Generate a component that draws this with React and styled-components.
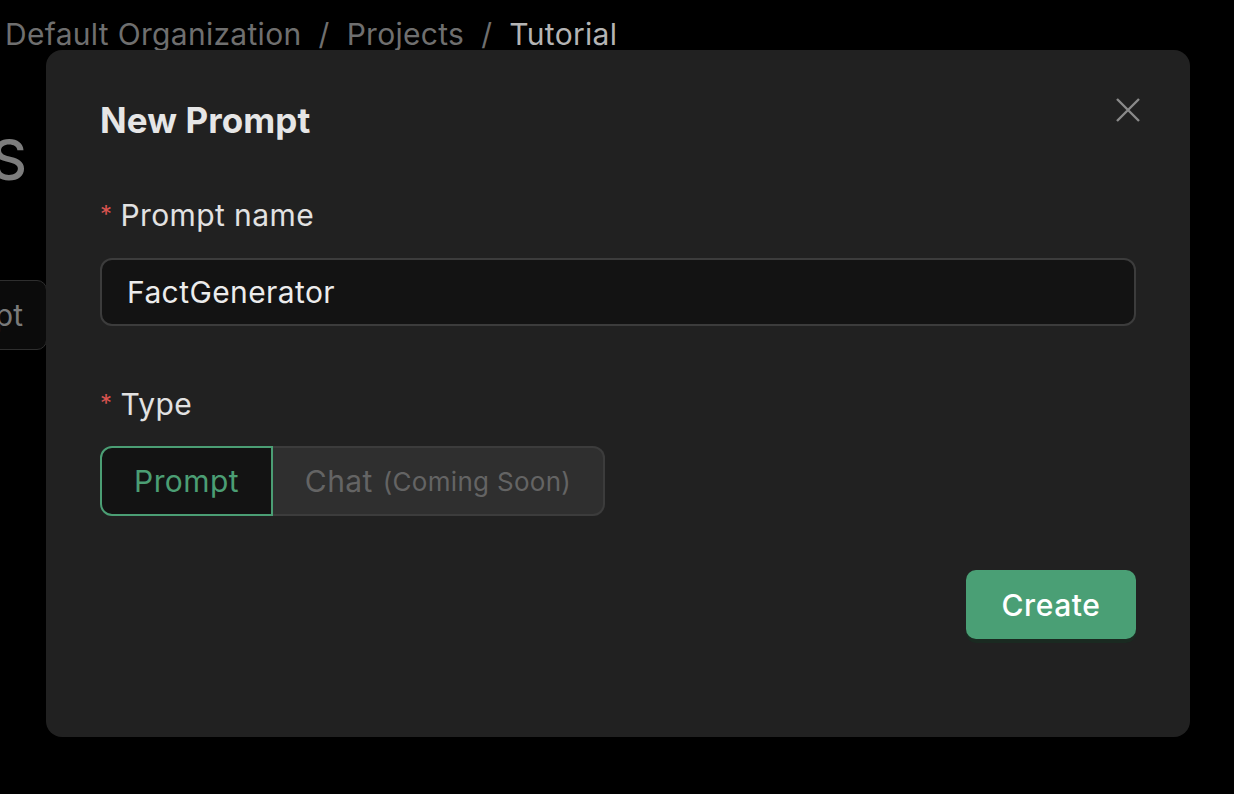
import React from 'react';
import styled, { createGlobalStyle } from 'styled-components';

const GlobalStyle = createGlobalStyle`
  html, body {
    margin: 0;
    padding: 0;
    background: #000;
    font-family: Inter, "Noto Sans", sans-serif;
    -webkit-font-smoothing: antialiased;
  }
`

const Page = styled.div`
  position: relative;
  width: 1234px;
  height: 794px;
  overflow: hidden;
  background: #000;
`

const Crumbs = styled.div`
  display: flex;
  gap: 17px;
  padding: 14px 0 0 5px;
  font-size: 30px;
  line-height: 40px;
  letter-spacing: 0.3px;
  color: #6f6f6f;
  .current {
    color: #b4b4b4;
  }
`

const Peek = styled.div`
  width: ${p => p.w}px;
  display: flex;
  justify-content: flex-end;
  white-space: nowrap;
`

const PageTitle = styled.h1`
  margin: 78px 0 0;
  font-size: 56px;
  line-height: 56px;
  font-weight: 500;
  color: #7d7d7d;
`

const GhostButton = styled.div`
  margin-top: 92px;
  height: 68px;
  padding: 0 23px;
  display: flex;
  align-items: center;
  border: 1px solid #2e2e2e;
  border-radius: 10px;
  background: #0b0b0b;
  color: #7a7a7a;
  font-size: 30px;
`

const Modal = styled.div`
  position: absolute;
  left: 46px;
  top: 50px;
  width: 1144px;
  height: 687px;
  box-sizing: border-box;
  padding: 50px 54px 0;
  background: #212121;
  border-radius: 16px;
  display: flex;
  flex-direction: column;
`

const Title = styled.h2`
  margin: 0;
  font-size: 35px;
  line-height: 40px;
  font-weight: 700;
  color: #e6e6e6;
  letter-spacing: 0.1px;
`

const Close = styled.button`
  position: absolute;
  top: 46px;
  right: 48px;
  width: 28px;
  height: 28px;
  padding: 0;
  border: none;
  background: none;
  color: #8a8a8a;
  display: flex;
  align-items: center;
  justify-content: center;
`

const Label = styled.div`
  margin-top: ${p => p.top}px;
  height: 40px;
  display: flex;
  align-items: center;
  gap: 8px;
  font-size: 30px;
  line-height: 40px;
  letter-spacing: 0.4px;
  color: #e2e2e2;
  .req {
    color: #d9534f;
    font-size: 24px;
    line-height: 1;
    align-self: flex-start;
    margin-top: 8px;
  }
`

const Input = styled.div`
  margin-top: 23px;
  height: 68px;
  box-sizing: border-box;
  padding: 0 25px;
  display: flex;
  align-items: center;
  background: #131313;
  border: 2px solid #3c3c3c;
  border-radius: 12px;
  font-size: 30px;
  letter-spacing: 0.4px;
  color: #ececec;
`

const Segments = styled.div`
  margin-top: 22px;
  display: flex;
`

const Segment = styled.div`
  height: 70px;
  width: ${p => p.w}px;
  box-sizing: border-box;
  display: flex;
  align-items: center;
  justify-content: center;
  gap: 10px;
  font-size: 30px;
  letter-spacing: 0.4px;
  border: 2px solid ${p => (p.active ? '#4b9e74' : '#3c3c3c')};
  border-left-width: ${p => (p.active ? 2 : 0)}px;
  border-radius: ${p => (p.active ? '12px 0 0 12px' : '0 12px 12px 0')};
  background: ${p => (p.active ? '#131313' : '#2f2f2f')};
  color: ${p => (p.active ? '#4b9e74' : '#646464')};
  small {
    font-size: 26px;
    letter-spacing: 0.3px;
  }
`

const Footer = styled.div`
  margin-top: 54px;
  display: flex;
  justify-content: flex-end;
`

const CreateButton = styled.button`
  height: 69px;
  width: 170px;
  padding: 0;
  border: none;
  border-radius: 10px;
  background: #4a9f75;
  color: #fff;
  font-family: inherit;
  font-size: 30px;
  font-weight: 500;
  letter-spacing: 0.6px;
  box-shadow: 0 4px 0 #1a2a21;
`

const App = () => {
  return (
    <Page>
      <GlobalStyle />
      <Crumbs>
        <span>Default Organization</span>
        <span>/</span>
        <span>Projects</span>
        <span>/</span>
        <span className="current">Tutorial</span>
      </Crumbs>
      <Peek w={27}>
        <PageTitle>PROMPTS</PageTitle>
      </Peek>
      <Peek w={47}>
        <GhostButton>+ New prompt</GhostButton>
      </Peek>

      <Modal>
        <Title>New Prompt</Title>
        <Close aria-label="Close">
          <svg width="26" height="26" viewBox="0 0 26 26" fill="none" stroke="currentColor" strokeWidth="2.4">
            <path d="M2 2 L24 24 M24 2 L2 24" />
          </svg>
        </Close>

        <Label top={55}>
          <span className="req">*</span>
          <span>Prompt name</span>
        </Label>
        <Input>FactGenerator</Input>

        <Label top={58}>
          <span className="req">*</span>
          <span>Type</span>
        </Label>
        <Segments>
          <Segment active w={173}>Prompt</Segment>
          <Segment w={332}>Chat <small>(Coming Soon)</small></Segment>
        </Segments>

        <Footer>
          <CreateButton>Create</CreateButton>
        </Footer>
      </Modal>
    </Page>
  );
};

export default App;
